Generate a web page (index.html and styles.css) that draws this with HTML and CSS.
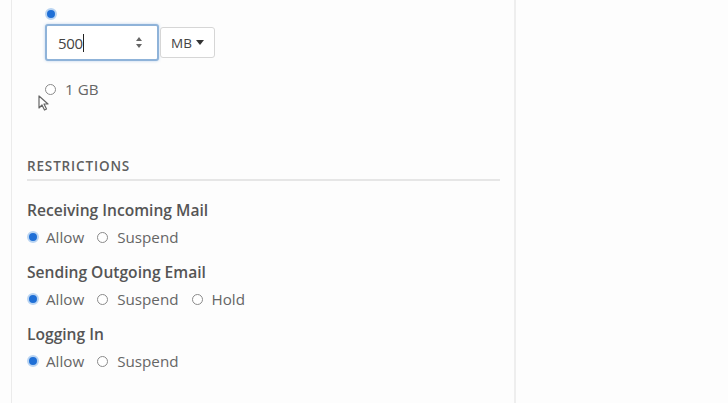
FILE: index.html
```html
<!DOCTYPE html>
<html>
<head>
<meta charset="utf-8">
<link rel="stylesheet" href="styles.css">
</head>
<body>
<div class="page">
  <div class="panel">
    <div class="quota">
      <div class="radio-only"><span class="radio checked"></span></div>
      <div class="input-group">
        <div class="num-input">
          <span class="num-value">500</span><span class="caret"></span>
          <svg class="spin" width="8" height="13" viewBox="0 0 8 13"><path d="M4 1 L7 5 L1 5 Z" fill="#666"/><path d="M4 12 L7 8 L1 8 Z" fill="#666"/></svg>
        </div>
        <div class="unit-btn">MB <svg width="8" height="5" viewBox="0 0 8 5"><path d="M0 0 L8 0 L4 5 Z" fill="#333"/></svg></div>
      </div>
      <div class="opt gb"><span class="radio"></span><span>1 GB</span>
        <svg class="pointer" width="11" height="16" viewBox="0 0 11 16"><path d="M1 1 L1 13 L4 10 L6.5 15 L8.5 14 L6 9 L10 9 Z" fill="#fff" stroke="#666" stroke-width="1.2" stroke-linejoin="round"/></svg>
      </div>
    </div>
    <h3 class="section-head">Restrictions</h3>
    <div class="field">
      <div class="label">Receiving Incoming Mail</div>
      <div class="opts">
        <span class="opt"><span class="radio checked"></span>Allow</span>
        <span class="opt"><span class="radio"></span>Suspend</span>
      </div>
    </div>
    <div class="field">
      <div class="label">Sending Outgoing Email</div>
      <div class="opts">
        <span class="opt"><span class="radio checked"></span>Allow</span>
        <span class="opt"><span class="radio"></span>Suspend</span>
        <span class="opt"><span class="radio"></span>Hold</span>
      </div>
    </div>
    <div class="field">
      <div class="label">Logging In</div>
      <div class="opts">
        <span class="opt"><span class="radio checked"></span>Allow</span>
        <span class="opt"><span class="radio"></span>Suspend</span>
      </div>
    </div>
  </div>
</div>
</body>
</html>
```

FILE: styles.css
```css
html, body {
  margin: 0;
  padding: 0;
  background: #fdfdfd;
  font-family: "Open Sans", "Liberation Sans", sans-serif;
  color: #666;
  overflow: hidden;
}
.page {
  display: flex;
  height: 403px;
  padding-left: 11px;
}
.panel {
  width: 505px;
  border-left: 1px solid #ebebeb;
  border-right: 2px solid #eeeeee;
  padding-left: 15px;
  padding-right: 14px;
  box-sizing: border-box;
  height: 420px;
}
.quota {
  padding-left: 18px;
}
.radio-only {
  padding-top: 8px;
  height: 11px;
  display: flex;
}
.radio {
  display: inline-block;
  width: 11px;
  height: 11px;
  border-radius: 50%;
  border: 1.4px solid #8a8a8a;
  box-sizing: border-box;
  background: #fff;
  flex: none;
}
.radio.checked {
  width: 12px;
  height: 12px;
  border: 2px solid #b9d4f2;
  background: #1f6fd6;
}
.input-group {
  display: flex;
  align-items: center;
  margin-top: 5px;
  height: 37px;
}
.num-input {
  width: 114px;
  height: 37px;
  box-sizing: border-box;
  border: 2px solid #8fb3d9;
  border-radius: 3px;
  box-shadow: 0 0 3px rgba(102,155,215,0.45);
  background: #fff;
  display: flex;
  align-items: center;
  padding-left: 11px;
  padding-right: 14px;
  font-size: 15px;
  color: #444;
}
.num-value {
  letter-spacing: -0.3px;
}
.caret {
  width: 1.5px;
  height: 18px;
  background: #222;
}
.spin {
  margin-left: auto;
}
.unit-btn {
  width: 55px;
  height: 31px;
  box-sizing: border-box;
  border: 1px solid #d6d6d6;
  border-radius: 3px;
  margin-left: 1px;
  display: flex;
  align-items: center;
  justify-content: center;
  gap: 4px;
  font-size: 13.5px;
  color: #444;
  background: #fff;
}
.opt {
  display: inline-flex;
  align-items: center;
  font-size: 15.2px;
  line-height: 20px;
  color: #666;
}
.opt .radio {
  margin-right: 9px;
}
.opt .radio.checked {
  margin-right: 7px;
}
.gb {
  display: flex;
  margin-top: 18px;
  margin-left: 0;
  position: relative;
  height: 20px;
}
.pointer {
  position: absolute;
  left: -7px;
  top: 16px;
}
.section-head {
  margin: 57px 0 0 0;
  font-size: 13.5px;
  font-weight: 600;
  letter-spacing: 0.85px;
  text-transform: uppercase;
  color: #5f5f5f;
  line-height: 20px;
  padding-bottom: 3px;
  border-bottom: 2px solid #e6e6e6;
}
.field {
  margin-top: 19px;
}
.field + .field {
  margin-top: 15px;
}
.label {
  font-size: 15.6px;
  font-weight: 600;
  color: #555;
  line-height: 20px;
}
.opts {
  display: flex;
  gap: 13px;
  margin-top: 7px;
}
```
